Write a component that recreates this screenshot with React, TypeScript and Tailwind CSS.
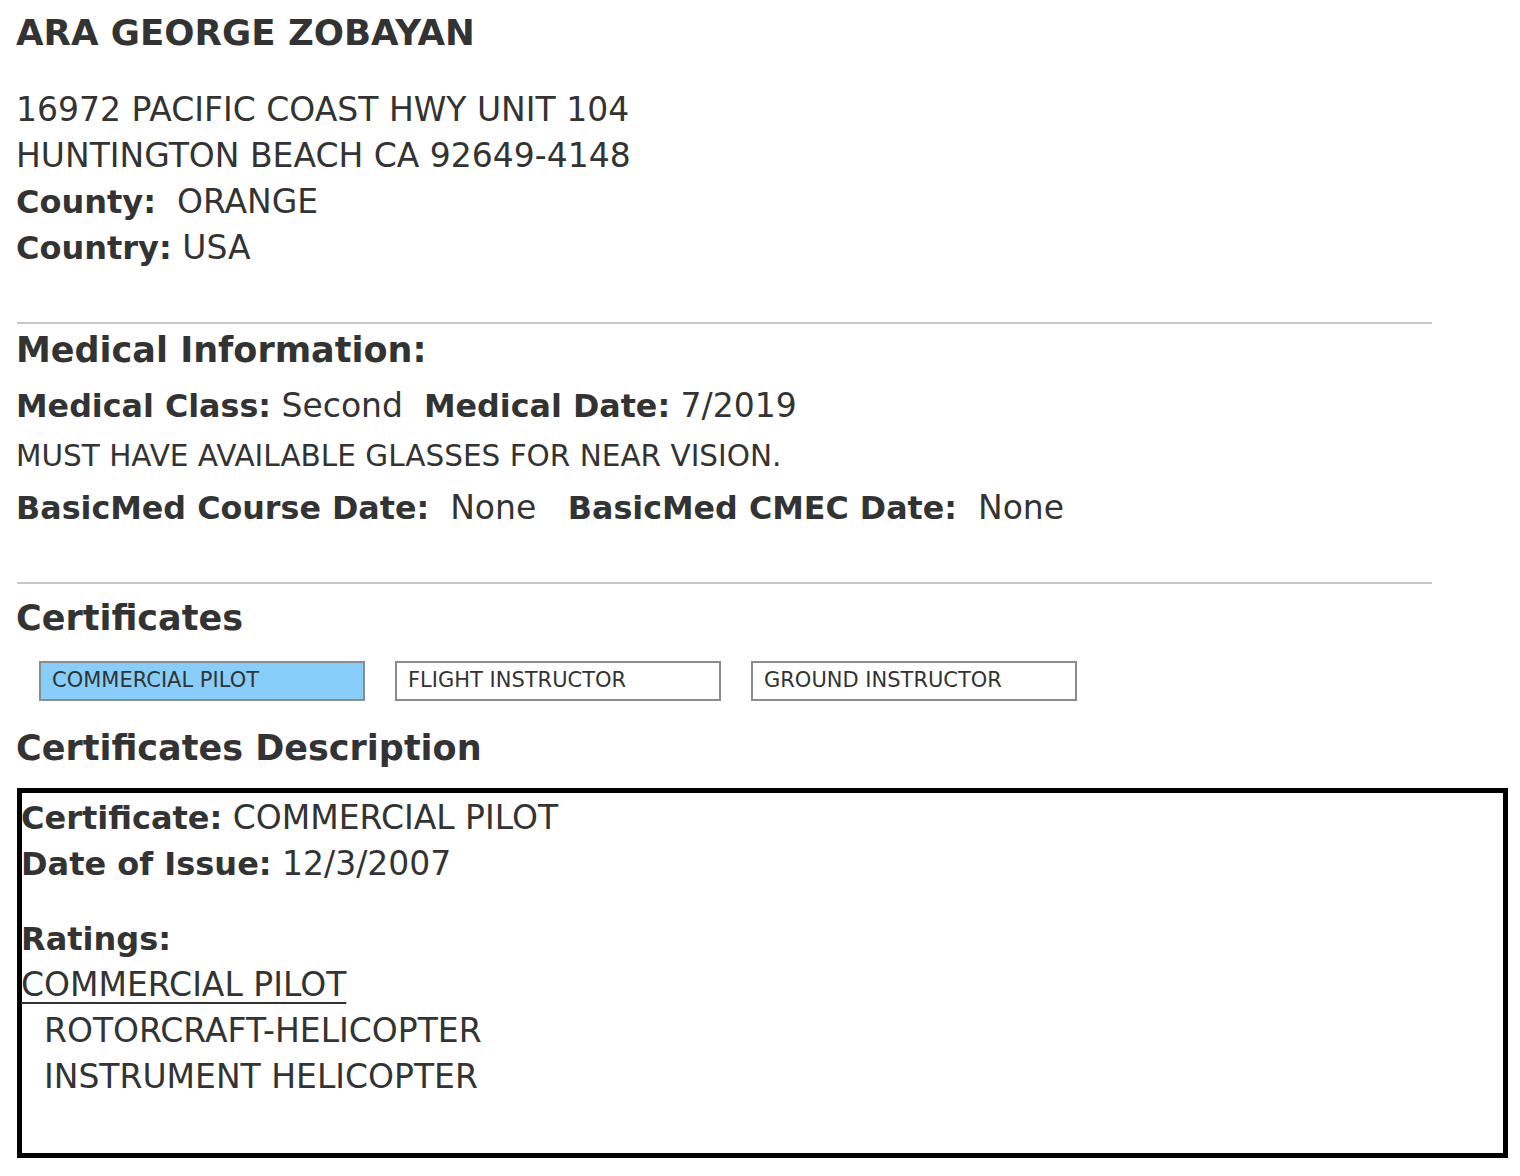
import React from "react";

const F = { fontFamily: '"DejaVu Sans", Verdana, sans-serif' };

export default function App() {
  return (
    <div className="bg-white min-h-[1176px] w-[1520px] text-[#333] pl-[16px] pt-[10px]" style={F}>
      <h1 className="text-[35.6px] font-bold leading-[46px]">ARA GEORGE ZOBAYAN</h1>

      <div className="mt-[31px] text-[33px] leading-[46px]">
        <div>16972 PACIFIC COAST HWY UNIT 104</div>
        <div>HUNTINGTON BEACH CA 92649-4148</div>
        <div>
          <span className="font-bold text-[32px]">County:</span>&nbsp; ORANGE
        </div>
        <div>
          <span className="font-bold text-[32px]">Country:</span> USA
        </div>
      </div>

      <div className="mt-[51px] w-[1415px] ml-px h-[2px] bg-[#c8c8c8]" />

      <h2 className="mt-[3px] text-[35px] font-bold leading-[46px]">Medical Information:</h2>
      <div className="mt-[10px] text-[33px] leading-[46px]">
        <span className="font-bold text-[31.75px]">Medical Class:</span> Second&nbsp;{" "}
        <span className="font-bold text-[31.75px]">Medical Date:</span> 7/2019
      </div>
      <div className="mt-[4px] text-[29.5px] leading-[46px]">MUST HAVE AVAILABLE GLASSES FOR NEAR VISION.</div>
      <div className="mt-[6px] text-[33px] leading-[46px]">
        <span className="font-bold text-[31.75px]">BasicMed Course Date:</span>&nbsp; None&nbsp;&nbsp;{" "}
        <span className="font-bold text-[31.75px]">BasicMed CMEC Date:</span>&nbsp; None
      </div>

      <div className="mt-[51px] w-[1415px] ml-px h-[2px] bg-[#c8c8c8]" />

      <h2 className="mt-[11px] text-[35px] font-bold leading-[46px]">Certificates</h2>

      <div className="mt-[20px] ml-[23px] flex gap-[30px]">
        <div className="w-[326px] h-[40px] border-2 border-[#8c8c8c] bg-[#87cefa] pl-[11px] flex items-center text-[21px]">
          COMMERCIAL PILOT
        </div>
        <div className="w-[326px] h-[40px] border-2 border-[#8c8c8c] bg-white pl-[11px] flex items-center text-[21px]">
          FLIGHT INSTRUCTOR
        </div>
        <div className="w-[326px] h-[40px] border-2 border-[#8c8c8c] bg-white pl-[11px] flex items-center text-[21px]">
          GROUND INSTRUCTOR
        </div>
      </div>

      <h2 className="mt-[24px] text-[35px] font-bold leading-[46px]">Certificates Description</h2>

      <div className="mt-[17px] ml-px w-[1491px] h-[370px] border-[5px] border-black text-[33px] leading-[46px]">
        <div className="pt-[2px] -ml-px">
          <div>
            <span className="font-bold text-[32px]">Certificate:</span> COMMERCIAL PILOT
          </div>
          <div>
            <span className="font-bold text-[32px]">Date of Issue:</span> 12/3/2007
          </div>
          <div className="mt-[29px] font-bold text-[32px]">Ratings:</div>
          <div>
            <span className="underline underline-offset-[6px] decoration-2">COMMERCIAL PILOT</span>
          </div>
          <div className="pl-[23px]">ROTORCRAFT-HELICOPTER</div>
          <div className="pl-[23px]">INSTRUMENT HELICOPTER</div>
        </div>
      </div>
    </div>
  );
}
